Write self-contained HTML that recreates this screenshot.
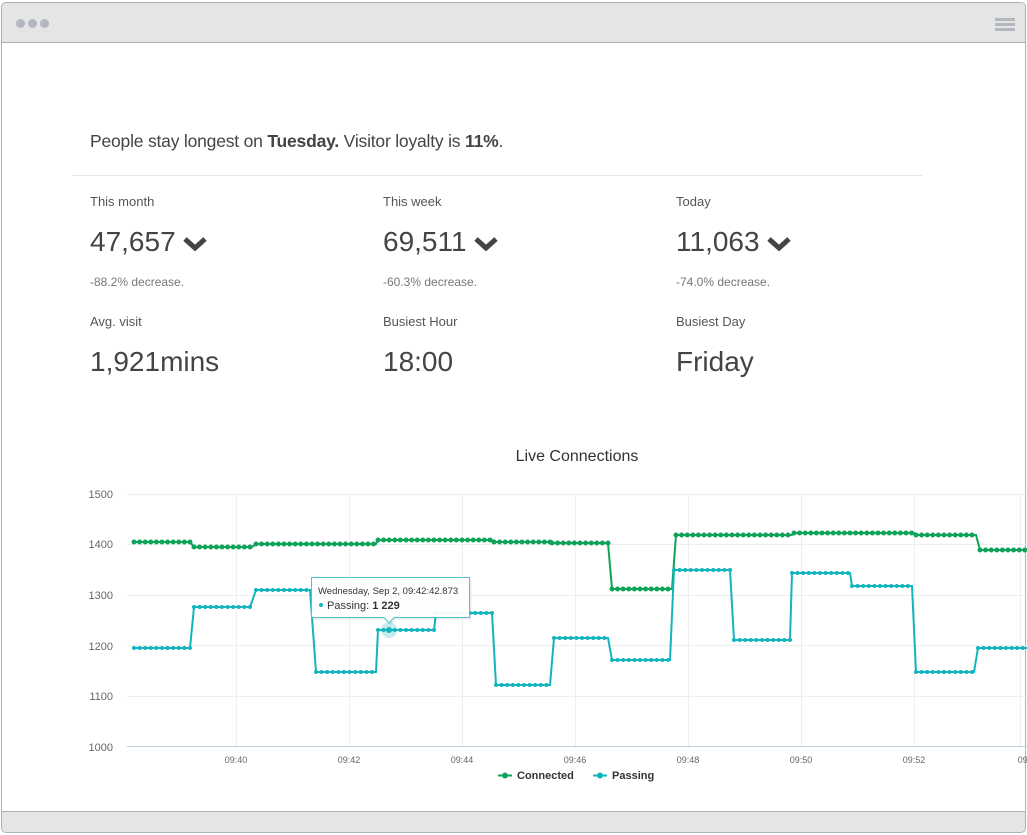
<!DOCTYPE html>
<html><head><meta charset="utf-8"><style>
*{margin:0;padding:0;box-sizing:border-box}
body{width:1027px;height:835px;background:#fff;font-family:"Liberation Sans",sans-serif;color:#444;position:relative;overflow:hidden}
.win{position:absolute;left:1px;top:2px;width:1025px;height:831px;border:1px solid #a9b0b6;border-radius:5px;overflow:hidden;background:#fff}
.top{position:absolute;left:0;top:0;right:0;height:40px;background:#e5e5e5;border-bottom:1px solid #a9b0b6}
.bot{position:absolute;left:0;bottom:0;right:0;height:21px;background:#e5e5e5;border-top:1px solid #a9b0b6}
.dot{position:absolute;top:16px;width:9px;height:9px;border-radius:50%;background:#b3b8be}
.bar{position:absolute;left:993px;width:20px;height:3px;background:#b3b8be}
.t{position:absolute;white-space:nowrap}
.h{left:90px;top:131px;font-size:17.5px;letter-spacing:-0.2px;color:#444}
.lab{font-size:13px;color:#555}
.num{font-size:28px;color:#444}
.dec{font-size:12px;color:#777}
.chev{display:inline-block;vertical-align:middle;margin-left:6px}
</style></head><body>
<div class="win">
<div class="top"><div class="dot" style="left:14px"></div><div class="dot" style="left:26px"></div><div class="dot" style="left:38px"></div>
<div class="bar" style="top:15px"></div><div class="bar" style="top:20px"></div><div class="bar" style="top:25px"></div></div>
<div class="bot"></div>
</div>
<div class="t h">People stay longest on <b>Tuesday.</b> Visitor loyalty is <b>11%</b>.</div>
<div style="position:absolute;left:72px;top:175px;width:850px;height:1px;background:#e5e5e5"></div>

<div class="t lab" style="left:90px;top:194px">This month</div>
<div class="t lab" style="left:383px;top:194px">This week</div>
<div class="t lab" style="left:676px;top:194px">Today</div>
<div class="t num" style="left:90px;top:226px">47,657<svg class="chev" width="26" height="18" viewBox="0 0 26 18"><path d="M3 4 L13 13 L23 4" fill="none" stroke="#444" stroke-width="5"/></svg></div>
<div class="t num" style="left:383px;top:226px">69,511<svg class="chev" width="26" height="18" viewBox="0 0 26 18"><path d="M3 4 L13 13 L23 4" fill="none" stroke="#444" stroke-width="5"/></svg></div>
<div class="t num" style="left:676px;top:226px">11,063<svg class="chev" width="26" height="18" viewBox="0 0 26 18"><path d="M3 4 L13 13 L23 4" fill="none" stroke="#444" stroke-width="5"/></svg></div>
<div class="t dec" style="left:90px;top:275px">-88.2% decrease.</div>
<div class="t dec" style="left:383px;top:275px">-60.3% decrease.</div>
<div class="t dec" style="left:676px;top:275px">-74.0% decrease.</div>
<div class="t lab" style="left:90px;top:314px">Avg. visit</div>
<div class="t lab" style="left:383px;top:314px">Busiest Hour</div>
<div class="t lab" style="left:676px;top:314px">Busiest Day</div>
<div class="t num" style="left:90px;top:346px">1,921mins</div>
<div class="t num" style="left:383px;top:346px">18:00</div>
<div class="t num" style="left:676px;top:346px">Friday</div>

<svg style="position:absolute;left:0;top:0" width="1027" height="835" font-family="Liberation Sans, sans-serif">
<text x="577" y="461" font-size="16" fill="#333" text-anchor="middle">Live Connections</text>
<g stroke="#eee" stroke-width="1">
<line x1="127" y1="494.5" x2="1027" y2="494.5"/><line x1="127" y1="544.5" x2="1027" y2="544.5"/>
<line x1="127" y1="595.5" x2="1027" y2="595.5"/><line x1="127" y1="645.5" x2="1027" y2="645.5"/>
<line x1="127" y1="696.5" x2="1027" y2="696.5"/>
<line x1="236.5" y1="494" x2="236.5" y2="746"/><line x1="349.5" y1="494" x2="349.5" y2="746"/>
<line x1="462.5" y1="494" x2="462.5" y2="746"/><line x1="575.5" y1="494" x2="575.5" y2="746"/>
<line x1="688.5" y1="494" x2="688.5" y2="746"/><line x1="801.5" y1="494" x2="801.5" y2="746"/>
<line x1="914.5" y1="494" x2="914.5" y2="746"/><line x1="1020.5" y1="494" x2="1020.5" y2="746"/>
</g>
<line x1="127" y1="746.5" x2="1027" y2="746.5" stroke="#c0d0e0"/>
<g font-size="11" fill="#666" text-anchor="end">
<text x="113" y="498">1500</text><text x="113" y="548">1400</text><text x="113" y="599">1300</text>
<text x="113" y="650">1200</text><text x="113" y="700">1100</text><text x="113" y="751">1000</text>
</g>
<g font-size="9" fill="#666" text-anchor="middle">
<text x="236" y="763">09:40</text><text x="349" y="763">09:42</text><text x="462" y="763">09:44</text>
<text x="575" y="763">09:46</text><text x="688" y="763">09:48</text><text x="801" y="763">09:50</text>
<text x="914" y="763">09:52</text><text x="1024" y="763">09:</text>
</g>
<path d="M134 542 H190 L194 547 H252 L256 544 H376 L378 540 H492 L494 542 H550 L552 543 H608 L612 589 H672 L676 535 H792 L794 533 H914 L916 535 H976 L980 550 H1027" fill="none" stroke="#0fa35a" stroke-width="2"/>
<path d="M134 542 H190 M194 547 H252 M256 544 H376 M378 540 H492 M494 542 H550 M552 543 H608 M612 589 H672 M676 535 H792 M794 533 H914 M916 535 H976 M980 550 H1027" fill="none" stroke="#0fa35a" stroke-width="5" stroke-linecap="round" stroke-dasharray="0 5.6"/>
<path d="M134 648 H190 L194 607 H250 L256 590 H310 L316 672 H376 L378 630 H434 L436 613 H492 L496 685 H550 L554 638 H608 L612 660 H670 L674 570 H730 L734 640 H790 L792 573 H850 L852 586 H912 L916 672 H974 L978 648 H1027" fill="none" stroke="#12b5be" stroke-width="2"/>
<path d="M134 648 H190 M194 607 H250 M256 590 H310 M316 672 H376 M378 630 H434 M436 613 H492 M496 685 H550 M554 638 H608 M612 660 H670 M674 570 H730 M734 640 H790 M792 573 H850 M852 586 H912 M916 672 H974 M978 648 H1027" fill="none" stroke="#12b5be" stroke-width="4" stroke-linecap="round" stroke-dasharray="0 5.6"/>
<circle cx="389" cy="630" r="8" fill="#12b5be" opacity="0.25"/>
<circle cx="389" cy="630" r="3" fill="#12b5be"/>
<path d="M313.5 579.5 H471.5 V619.5 H396 L391 625 L386 619.5 H313.5 Z" fill="#000" opacity="0.08"/>
<path d="M311.5 577.5 H469.5 V617.5 H394 L389 623 L384 617.5 H311.5 Z" fill="#fff" fill-opacity="0.95" stroke="#4cc6cc"/>
<text x="318" y="594" font-size="9.5" fill="#333">Wednesday, Sep 2, 09:42:42.873</text>
<circle cx="321" cy="605" r="2" fill="#12b5be"/>
<text x="327" y="609" font-size="11" fill="#333">Passing: <tspan font-weight="bold">1 229</tspan></text>
<line x1="498" y1="775.5" x2="512" y2="775.5" stroke="#0fa35a" stroke-width="2"/><circle cx="505" cy="775.5" r="3" fill="#0fa35a"/>
<text x="517" y="779" font-size="11" font-weight="bold" fill="#333">Connected</text>
<line x1="593" y1="775.5" x2="607" y2="775.5" stroke="#12b5be" stroke-width="2"/><circle cx="600" cy="775.5" r="3" fill="#12b5be"/>
<text x="612" y="779" font-size="11" font-weight="bold" fill="#333">Passing</text>
</svg>
</body></html>
